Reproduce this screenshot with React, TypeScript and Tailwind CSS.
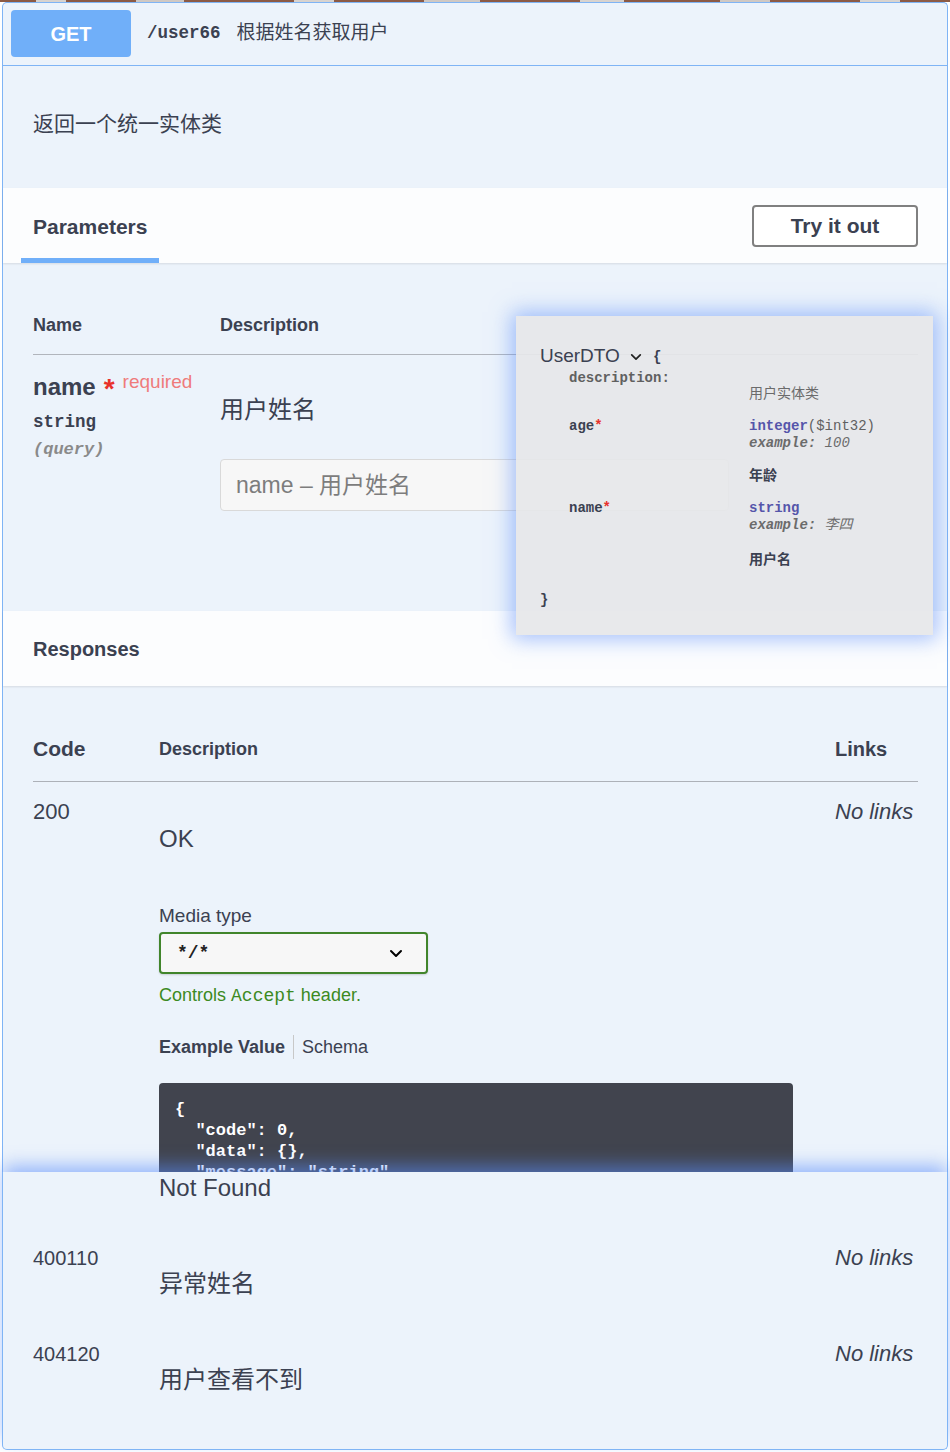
import React from "react";

const MONO = "font-['Liberation_Mono','Noto_Sans_CJK_SC',monospace]";

function Chevron({ className }: { className?: string }) {
  return (
    <svg className={className} viewBox="0 0 14 9" fill="none" stroke="currentColor" strokeWidth="2" strokeLinecap="round" strokeLinejoin="round">
      <path d="M2 2l5 5 5-5" />
    </svg>
  );
}

export default function App() {
  return (
    <div className="w-[950px] h-[1452px] overflow-hidden bg-white font-['Liberation_Sans','Noto_Sans_CJK_SC',sans-serif] text-[#3b4151]">
      {/* top strip from the page above */}
      <div className="h-[2px] bg-[#8b5a45] flex">
        <div className="ml-[36px] w-[30px] bg-[#d8d3cf]" />
        <div className="ml-[70px] w-[48px] bg-[#cfc8c3]" />
        <div className="ml-[110px] w-[40px] bg-[#d8d3cf]" />
        <div className="ml-[90px] w-[56px] bg-[#cfc8c3]" />
        <div className="ml-[100px] w-[44px] bg-[#d8d3cf]" />
        <div className="ml-[96px] w-[50px] bg-[#cfc8c3]" />
        <div className="ml-[90px] w-[40px] bg-[#d8d3cf]" />
      </div>

      {/* upper panel */}
      <div className="relative mx-[2px] border-x border-t border-[#7fb4f5] rounded-t-[5px] bg-[#ecf3fb]">
        {/* summary */}
        <div className="flex items-center pl-[8px] pt-[7px] pb-[8px] border-b border-[#7fb4f5]">
          <div className="w-[120px] h-[47px] rounded-[4px] bg-[#70aff9] text-white font-bold text-[20px] flex items-center justify-center">
            GET
          </div>
          <span className={`ml-[16px] ${MONO} font-bold text-[17.5px]`}>/user66</span>
          <span className="ml-[16px] text-[19px]">根据姓名获取用户</span>
        </div>

        {/* description */}
        <div className="h-[122px] pt-[43px] pl-[30px] text-[21px] leading-[30px]">返回一个统一实体类</div>

        {/* parameters header */}
        <div className="h-[75px] bg-[#fcfdfe] shadow-[0_1px_2px_rgba(0,0,0,0.1)] flex justify-between">
          <div className="ml-[18px] w-[138px] pl-[12px] pt-[8px] flex items-center border-b-[5px] border-[#70aff9] text-[21px] font-bold">
            Parameters
          </div>
          <div className="self-center mr-[29px] w-[166px] h-[42px] border-2 border-[#808080] rounded-[4px] bg-white flex items-center justify-center text-[21px] font-bold">
            Try it out
          </div>
        </div>

        {/* parameters table */}
        <div className="h-[348px] pt-[50px] pl-[30px] pr-[29px]">
          <div className="flex pb-[17px] border-b border-[#b1b5bc] text-[18px] font-bold leading-[24px]">
            <div className="w-[187px]">Name</div>
            <div>Description</div>
          </div>
          <div className="flex pt-[17px]">
            <div className="w-[187px]">
              <div className="flex items-start">
                <span className="text-[24px] font-bold leading-[30px]">name</span>
                <span className="ml-[8px] mt-[4px] text-[28px] font-bold leading-[26px] text-[#e8322b]">*</span>
                <span className="ml-[8px] text-[19px] leading-[20px] text-[#ef7b7b]">required</span>
              </div>
              <div className={`mt-[8px] ${MONO} font-bold text-[17.5px] leading-[24px]`}>string</div>
              <div className={`mt-[4px] ${MONO} font-bold italic text-[17px] leading-[24px] text-[#8a8a8a]`}>(query)</div>
            </div>
            <div>
              <div className="mt-[22px] text-[24px] leading-[32px]">用户姓名</div>
              <input
                className="mt-[33px] block w-[509px] h-[52px] rounded-[4px] border border-[#d9d9d9] bg-[#f7f7f7] pl-[15px] text-[23px] outline-none placeholder:text-[#7d7d7d]"
                placeholder="name – 用户姓名"
              />
            </div>
          </div>
        </div>

        {/* responses header */}
        <div className="h-[75px] bg-[#fcfdfe] shadow-[0_1px_2px_rgba(0,0,0,0.1)] flex items-center pl-[30px] text-[20px] font-bold">
          Responses
        </div>

        {/* responses table */}
        <div className="pt-[49px] pl-[30px] pr-[29px]">
          <div className="flex items-center pb-[18px] border-b border-[#adb1b8]">
            <div className="w-[126px] text-[21px] font-bold leading-[28px]">Code</div>
            <div className="flex-1 text-[18px] font-bold leading-[28px]">Description</div>
            <div className="w-[83px] text-[20px] font-bold leading-[28px]">Links</div>
          </div>
          <div className="flex">
            <div className="w-[126px] pt-[16px] text-[22px] leading-[28px]">200</div>
            <div className="flex-1 pt-[42px]">
              <div className="text-[24px] leading-[30px]">OK</div>
              <div className="mt-[50px] text-[19px] leading-[24px]">Media type</div>
              <div className="mt-[4px] w-[269px] h-[42px] rounded-[4px] border-2 border-[#41852b] bg-[#f7f7f7] shadow-[0_1px_2px_rgba(0,0,0,0.15)] flex items-center justify-between pl-[16px] pr-[23px]">
                <span className={`${MONO} font-bold text-[18px] text-[#222]`}>*/*</span>
                <Chevron className="w-[14px] h-[9px] text-black" />
              </div>
              <div className="mt-[9px] text-[18px] leading-[24px] text-[#3c8a22]">
                Controls <span className={MONO}>Accept</span> header.
              </div>
              <div className="mt-[27px] flex items-center text-[18px] leading-[24px]">
                <span className="font-bold">Example Value</span>
                <span className="mx-[8px] w-px h-[24px] bg-[#c8c8c8]" />
                <span>Schema</span>
              </div>
              <div className="mt-[24px] w-[634px] h-[89px] overflow-hidden rounded-t-[4px] bg-[#41444e] pl-[16px] pt-[16px]">
                <pre className={`${MONO} font-bold text-[17px] leading-[21px] text-white whitespace-pre`}>
{`{
  "code": 0,
  "data": {},
  "message": "string"
}`}
                </pre>
              </div>
            </div>
            <div className="w-[83px] pt-[16px] text-[22px] leading-[28px] italic">No links</div>
          </div>
        </div>

        {/* schema popup */}
        <div className="absolute left-[513px] top-[313px] w-[417px] h-[319px] bg-[rgba(230,231,233,0.92)] shadow-[0_0_20px_4px_rgba(90,140,250,0.55)] pl-[24px] pt-[28px]">
          <div className="flex items-center">
            <span className="text-[19px] leading-[24px] text-[#3b4151]">UserDTO</span>
            <Chevron className="ml-[10px] mt-[2px] w-[12px] h-[8px] text-[#222]" />
            <span className={`ml-[11px] mt-[3px] ${MONO} font-bold text-[14px] text-[#3b4151]`}>{"{"}</span>
          </div>
          <div className={`pl-[29px] ${MONO} text-[14px]`}>
            <div className="mt-[1px] flex">
              <div className="w-[180px] font-bold leading-[18px] text-[#606060]">description:</div>
              <div className="pt-[16px] leading-[18px] text-[#6b6b6b]">用户实体类</div>
            </div>
            <div className="mt-[15px] flex">
              <div className="w-[180px] font-bold leading-[17px] text-[#3b4151]">
                age<span className="text-[#e8322b]">*</span>
              </div>
              <div>
                <div className="leading-[17px]">
                  <span className="font-bold text-[#5555aa]">integer</span>
                  <span className="text-[#606060]">($int32)</span>
                </div>
                <div className="leading-[17px] italic text-[#6b6b6b]">
                  <span className="font-bold">example:</span> 100
                </div>
                <div className="mt-[15px] leading-[18px] font-bold text-[#3b4151]">年龄</div>
              </div>
            </div>
            <div className="mt-[15px] flex">
              <div className="w-[180px] font-bold leading-[17px] text-[#3b4151]">
                name<span className="text-[#e8322b]">*</span>
              </div>
              <div>
                <div className="leading-[17px] font-bold text-[#5555aa]">string</div>
                <div className="leading-[17px] italic text-[#6b6b6b]">
                  <span className="font-bold">example:</span> 李四
                </div>
                <div className="mt-[17px] leading-[18px] font-bold text-[#3b4151]">用户名</div>
              </div>
            </div>
          </div>
          <div className={`mt-[22px] ${MONO} font-bold text-[14px] leading-[18px] text-[#3b4151]`}>{"}"}</div>
        </div>
      </div>

      {/* lower panel */}
      <div className="relative z-10 mx-[2px] h-[278px] border-x border-b border-[#7fb4f5] rounded-b-[5px] bg-[#ecf3fb] shadow-[0_-8px_18px_-2px_rgba(90,140,250,0.6)] pl-[30px] pr-[29px]">
        <div className="h-[60px] pl-[126px] pt-[1px] text-[24px] leading-[30px]">Not Found</div>
        <div className="flex h-[96px]">
          <div className="w-[126px] pt-[13px] text-[20px] leading-[26px]">400110</div>
          <div className="flex-1 pt-[36px] text-[24px] leading-[32px]">异常姓名</div>
          <div className="w-[83px] pt-[13px] text-[22px] leading-[26px] italic">No links</div>
        </div>
        <div className="flex h-[96px]">
          <div className="w-[126px] pt-[13px] text-[20px] leading-[26px]">404120</div>
          <div className="flex-1 pt-[36px] text-[24px] leading-[32px]">用户查看不到</div>
          <div className="w-[83px] pt-[13px] text-[22px] leading-[26px] italic">No links</div>
        </div>
      </div>
    </div>
  );
}
